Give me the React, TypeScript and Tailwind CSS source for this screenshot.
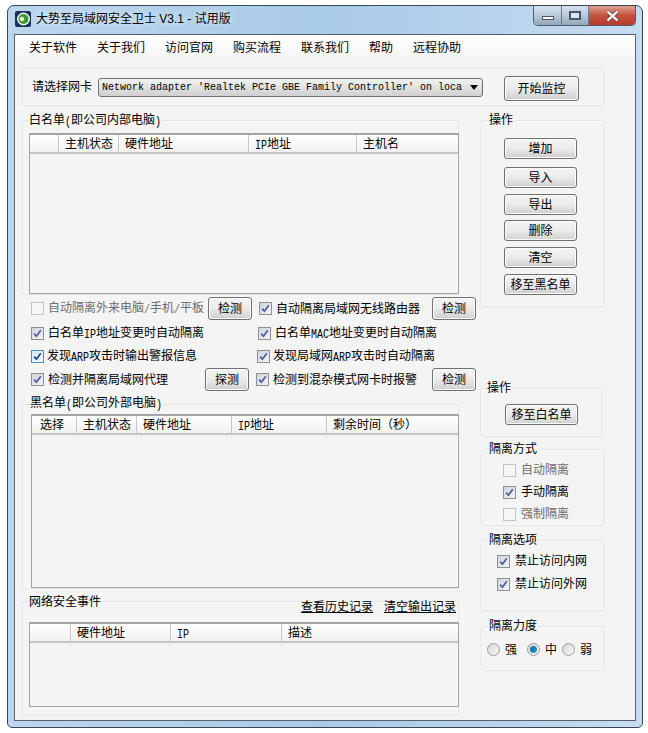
import type { ReactNode } from "react";

const menus = ["关于软件", "关于我们", "访问官网", "购买流程", "联系我们", "帮助", "远程协助"];

function Lat({ children }: { children: ReactNode }) {
  return <span className="inline-block scale-y-125 font-['Liberation_Mono',monospace] text-[10px]">{children}</span>;
}

function Btn({ children, className = "" }: { children: ReactNode; className?: string }) {
  return (
    <button
      type="button"
      className={`flex shrink-0 items-center justify-center rounded-[3px] border border-[#707070] bg-linear-to-b from-[#f4f4f4] via-[#ebebeb] to-[#cfcfcf] text-[12px] leading-none text-black shadow-[inset_0_0_0_1px_#fbfbfb] ${className}`}
    >
      {children}
    </button>
  );
}

function Group({
  label,
  labelClass = "top-[-9px] left-[6px]",
  className = "",
  children,
}: {
  label?: ReactNode;
  labelClass?: string;
  className?: string;
  children?: ReactNode;
}) {
  return (
    <div className={`relative rounded-[3px] border border-[#dfe5ea] shadow-[inset_0_0_0_1px_#fafafa] ${className}`}>
      {label && (
        <span className={`absolute bg-[#f4f4f4] pr-[1px] text-[12px] leading-[16px] text-black ${labelClass}`}>
          {label}
        </span>
      )}
      {children}
    </div>
  );
}

function Check({ state = "gray" }: { state?: "off" | "gray" | "focus" }) {
  const box =
    state === "off"
      ? "border-[#c4c4c4] bg-[#f6f6f6]"
      : state === "focus"
        ? "border-[#4f8fc4] bg-linear-to-br from-[#d6e8f6] to-[#f7fbff]"
        : "border-[#8e8f8f] bg-linear-to-br from-[#cfd3dc] to-[#f4f4f6]";
  return (
    <span className={`flex h-[13px] w-[13px] shrink-0 items-center justify-center border ${box}`}>
      {state !== "off" && (
        <svg width="9" height="9" viewBox="0 0 9 9" fill="none">
          <path d="M1.2 4.6 3.4 7.2 7.8 1.2" stroke={state === "focus" ? "#1d3f9c" : "#4a5a9e"} strokeWidth="1.7" />
        </svg>
      )}
    </span>
  );
}

function Option({
  state,
  children,
  className = "",
  gap = "gap-[4px]",
}: {
  state?: "off" | "gray" | "focus";
  children: ReactNode;
  className?: string;
  gap?: string;
}) {
  return (
    <label className={`flex items-center text-[12px] leading-[16px] whitespace-nowrap ${gap} ${state === "off" ? "text-[#6d6d6d]" : "text-black"} ${className}`}>
      <Check state={state} />
      <span>{children}</span>
    </label>
  );
}

function Radio({ on, children, className = "" }: { on?: boolean; children: ReactNode; className?: string }) {
  return (
    <label className={`flex items-center gap-[5px] text-[12px] leading-[16px] text-black ${className}`}>
      <span className="flex h-[13px] w-[13px] items-center justify-center rounded-full border border-[#9a9a9a] bg-linear-to-br from-[#d8d8d8] to-[#f8f8f8]">
        {on && <span className="h-[7px] w-[7px] rounded-full bg-linear-to-br from-[#0b5f92] to-[#2aa6dc]" />}
      </span>
      {children}
    </label>
  );
}

type Col = { title: ReactNode; w: number };

function ListView({ cols, className = "" }: { cols: Col[]; className?: string }) {
  return (
    <div className={`flex flex-col border border-[#a4a4a4] ${className}`}>
      <div className="flex h-[20px] shrink-0 border-t-[1px] border-b-[2px] border-t-[#a4a4a4] border-b-[#c4c4c4] bg-linear-to-b from-white to-[#f1f1f1]">
        {cols.map((c, i) => (
          <div
            key={i}
            style={{ width: c.w }}
            className="shrink-0 border-r border-[#c8c8c8] pt-[1px] pl-[6px] text-[12px] leading-[16px] whitespace-nowrap text-black last:border-r-0"
          >
            {c.title}
          </div>
        ))}
      </div>
    </div>
  );
}

function TitleBar() {
  return (
    <div className="flex h-[28px] items-start justify-between">
      <div className="mt-[5px] ml-[1px] flex items-center gap-[5px]">
        <svg width="16" height="16" viewBox="0 0 16 16">
          <rect width="16" height="16" rx="2" fill="#1c2f63" />
          <circle cx="8.5" cy="8" r="6.5" fill="#f2f6ee" />
          <circle cx="8.5" cy="8" r="5" fill="#3f9a2e" />
          <circle cx="7" cy="8" r="2.2" fill="#dff2c8" />
        </svg>
        <span className="text-[12px] leading-[16px] text-black [text-shadow:0_0_6px_#fff]">
          大势至局域网安全卫士 V3.1 - 试用版
        </span>
      </div>
      <div className="flex h-[20px] w-[103px] overflow-hidden rounded-b-[5px] border border-t-0 border-[#4d5b6b]">
        <div className="flex w-[28px] items-end justify-center border-r border-[#6d7c8c] bg-linear-to-b from-[#d5e2ee] via-[#b9cada] to-[#93a7ba] pb-[5px]">
          <span className="h-[4px] w-[12px] border border-[#4a5663] bg-white" />
        </div>
        <div className="flex w-[27px] items-center justify-center border-r border-[#6d7c8c] bg-linear-to-b from-[#d5e2ee] via-[#b9cada] to-[#93a7ba]">
          <span className="h-[9px] w-[12px] border-2 border-[#4a5663] bg-[#dfe7ee]" />
        </div>
        <div className="flex flex-1 items-center justify-center bg-linear-to-b from-[#dca192] via-[#c5523f] to-[#b63a28]">
          <svg width="15" height="12" viewBox="0 0 15 12">
            <path d="M2.5 1.5 12.5 10.5M12.5 1.5 2.5 10.5" stroke="#4b3a3a" strokeWidth="3.8" fill="none" />
            <path d="M2.5 1.5 12.5 10.5M12.5 1.5 2.5 10.5" stroke="#f4f0ee" strokeWidth="2.4" fill="none" />
          </svg>
        </div>
      </div>
    </div>
  );
}

export default function App() {
  return (
    <div className="h-[733px] w-[648px] bg-white pt-[5px] pl-[7px] font-['Liberation_Sans','Noto_Sans_CJK_SC',sans-serif]">
      <div className="h-[723px] w-[636px] rounded-t-[7px] rounded-b-[5px] border border-[#3b4652] bg-linear-to-r from-[#bcd6ee] via-[#a9cae8] to-[#c6dcf1] px-[6px]">
        <TitleBar />
        <div className="h-[687px] w-[622px] border border-[#56616d] bg-[#f4f4f4]">
          <nav className="flex h-[25px] items-center gap-[20px] bg-linear-to-b from-white to-[#f4f4f4] pl-[14px] text-[12px] leading-[16px] text-black">
            {menus.map((m) => (
              <span key={m}>{m}</span>
            ))}
          </nav>

          <div className="pt-[8px] pl-[7px]">
            <Group className="flex h-[38px] w-[582px] items-center pl-[9px]">
              <span className="text-[12px] leading-[16px] text-black">请选择网卡</span>
              <div className="ml-[6px] flex h-[19px] w-[385px] items-center justify-between rounded-[3px] border border-[#707070] bg-linear-to-b from-[#f2f2f2] to-[#d0d0d0] pr-[4px] pl-[3px]">
                <span className="w-[362px] overflow-hidden font-['Liberation_Mono',monospace] text-[10px] whitespace-nowrap text-black">
                  Network adapter 'Realtek PCIe GBE Family Controller' on loca
                </span>
                <span className="h-0 w-0 border-x-[4px] border-t-[5px] border-x-transparent border-t-black" />
              </div>
              <Btn className="mt-[3px] ml-[21px] h-[25px] w-[75px]">开始监控</Btn>
            </Group>

            <div className="mt-[14px] flex">
              <div className="w-[459px]">
                <Group
                  className="flex h-[175px] w-[437px] flex-col pt-[12px] pl-[6px]"
                  label={<>白名单<Lat>(</Lat>即公司内部电脑<Lat>)</Lat></>}
                >
                  <ListView
                    className="h-[161px] w-[430px]"
                    cols={[
                      { title: "", w: 29 },
                      { title: "主机状态", w: 60 },
                      { title: "硬件地址", w: 130 },
                      { title: <><Lat>IP</Lat>地址</>, w: 108 },
                      { title: "主机名", w: 101 },
                    ]}
                  />
                </Group>

                <div className="mt-[2px] flex h-[23px] items-center pl-[9px]">
                  <Option state="off" className="w-[177px]">自动隔离外来电脑<Lat>/</Lat>手机<Lat>/</Lat>平板</Option>
                  <Btn className="h-[23px] w-[44px]">检测</Btn>
                  <Option state="gray" className="ml-[7px] w-[173px]">自动隔离局域网无线路由器</Option>
                  <Btn className="h-[23px] w-[44px]">检测</Btn>
                </div>
                <div className="mt-[2px] flex h-[23px] items-center pl-[9px]">
                  <Option state="gray" className="w-[227px]">白名单<Lat>IP</Lat>地址变更时自动隔离</Option>
                  <Option state="gray">白名单<Lat>MAC</Lat>地址变更时自动隔离</Option>
                </div>
                <div className="flex h-[23px] items-center pl-[9px]">
                  <Option state="focus" gap="gap-[3px]" className="w-[226px]">发现<Lat>ARP</Lat>攻击时输出警报信息</Option>
                  <Option state="gray" gap="gap-[3px]">发现局域网<Lat>ARP</Lat>攻击时自动隔离</Option>
                </div>
                <div className="flex h-[23px] items-center pl-[9px]">
                  <Option state="gray" className="w-[174px]">检测并隔离局域网代理</Option>
                  <Btn className="h-[23px] w-[44px]">探测</Btn>
                  <Option state="gray" className="ml-[7px] w-[176px]">检测到混杂模式网卡时报警</Option>
                  <Btn className="h-[23px] w-[44px]">检测</Btn>
                </div>

                <Group
                  className="mt-[13px] flex h-[185px] w-[437px] flex-col pt-[9px] pl-[8px]"
                  labelClass="top-[-10px] left-[7px]"
                  label={<>黑名单<Lat>(</Lat>即公司外部电脑<Lat>)</Lat></>}
                >
                  <ListView
                    className="h-[175px] w-[428px]"
                    cols={[
                      { title: <span className="ml-[2px]">选择</span>, w: 45 },
                      { title: "主机状态", w: 60 },
                      { title: "硬件地址", w: 95 },
                      { title: <><Lat>IP</Lat>地址</>, w: 95 },
                      { title: "剩余时间（秒）", w: 131 },
                    ]}
                  />
                </Group>

                <Group className="mt-[12px] h-[114px] w-[437px]" labelClass="top-[-8px] left-[6px]" label="网络安全事件">
                  <div className="-mt-[3px] flex justify-end gap-[11px] pr-[2px] text-[12px] leading-[16px] text-black underline">
                    <span>查看历史记录</span>
                    <span>清空输出记录</span>
                  </div>
                  <ListView
                    className="mt-[7px] ml-[6px] h-[85px] w-[430px]"
                    cols={[
                      { title: "", w: 41 },
                      { title: "硬件地址", w: 100 },
                      { title: <Lat>IP</Lat>, w: 111 },
                      { title: "描述", w: 176 },
                    ]}
                  />
                </Group>
              </div>

              <div className="w-[123px]">
                <Group className="flex h-[187px] w-[123px] flex-col pt-[17px] pl-[22px]" labelClass="top-[-9px] left-[7px]" label="操作">
                  <Btn className="h-[21px] w-[73px]">增加</Btn>
                  <Btn className="mt-[8px] h-[21px] w-[73px]">导入</Btn>
                  <Btn className="mt-[6px] h-[21px] w-[73px]">导出</Btn>
                  <Btn className="mt-[5px] h-[21px] w-[73px]">删除</Btn>
                  <Btn className="mt-[6px] h-[21px] w-[73px]">清空</Btn>
                  <Btn className="mt-[6px] h-[21px] w-[73px]">移至黑名单</Btn>
                </Group>

                <Group className="mt-[81px] ml-[-1px] h-[49px] w-[122px] pt-[15px] pl-[24px]" labelClass="top-[-9px] left-[6px]" label="操作">
                  <Btn className="h-[21px] w-[73px]">移至白名单</Btn>
                </Group>

                <Group className="mt-[12px] flex h-[77px] w-[123px] flex-col gap-[6px] pt-[12px] pl-[21px]" labelClass="top-[-9px] left-[7px]" label="隔离方式">
                  <Option state="off" gap="gap-[5px]">自动隔离</Option>
                  <Option state="gray" gap="gap-[5px]">手动隔离</Option>
                  <Option state="off" gap="gap-[5px]">强制隔离</Option>
                </Group>

                <Group className="mt-[14px] flex h-[71px] w-[123px] flex-col gap-[7px] pt-[12px] pl-[15px]" labelClass="top-[-9px] left-[7px]" label="隔离选项">
                  <Option state="gray" gap="gap-[5px]">禁止访问内网</Option>
                  <Option state="gray" gap="gap-[5px]">禁止访问外网</Option>
                </Group>

                <Group className="mt-[15px] flex h-[45px] w-[123px] items-center pt-[2px] pl-[5px]" labelClass="top-[-9px] left-[7px]" label="隔离力度">
                  <Radio>强</Radio>
                  <Radio on className="ml-[10px]">中</Radio>
                  <Radio className="ml-[5px]">弱</Radio>
                </Group>
              </div>
            </div>
          </div>
        </div>
      </div>
    </div>
  );
}
